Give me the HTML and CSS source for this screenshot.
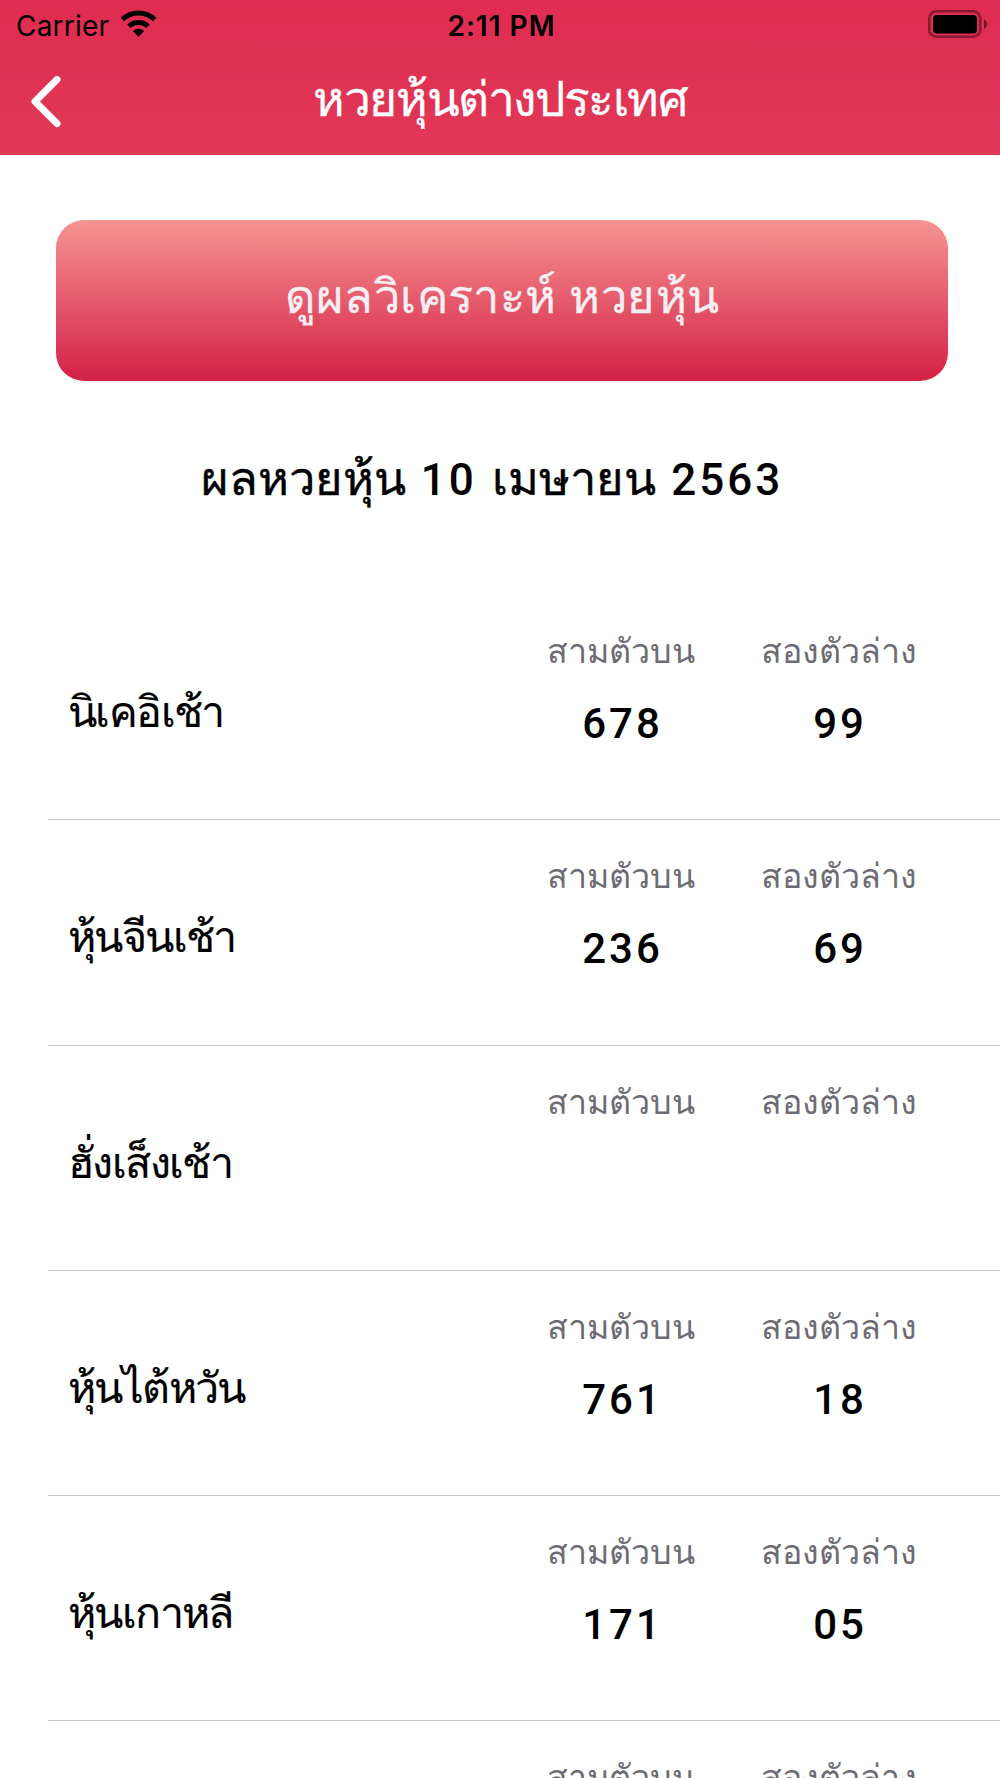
FILE: index.html
```html
<!DOCTYPE html>
<html lang="th">
<head>
    <meta charset="UTF-8">
    <meta name="viewport" content="width=device-width, initial-scale=1.0">
    <title>หวยหุ้นต่างประเทศ</title>
    <link rel="stylesheet" href="styles.css">
</head>
<body>
    <header class="header">
        <div class="status-bar">
            <div class="carrier">
                <span>Carrier</span>
                <svg class="wifi" viewBox="0 0 36 27" width="37" height="27">
                    <path d="M18 27 L12.4 21 Q18 16.4 23.6 21 Z" fill="#000"/>
                    <path d="M8.4 16.2 A14 14 0 0 1 27.6 16.2" fill="none" stroke="#000" stroke-width="5"/>
                    <path d="M1.9 9.5 A23 23 0 0 1 34.1 9.5" fill="none" stroke="#000" stroke-width="5"/>
                </svg>
            </div>
            <span class="time">2:11 PM</span>
            <svg class="battery" viewBox="0 0 59 28" width="59" height="28">
                <rect x="1.3" y="1.3" width="51" height="25.4" rx="7" fill="none" stroke="#000" stroke-opacity="0.4" stroke-width="2.6"/>
                <rect x="5" y="5" width="44" height="18.5" rx="4" fill="#000"/>
                <path d="M56 9 Q59 11 59 14 Q59 17 56 19 Z" fill="#000" fill-opacity="0.5"/>
            </svg>
        </div>
        <div class="nav-bar">
            <svg class="back" viewBox="0 0 30 52" width="30" height="52">
                <path d="M26 3.5 L4 25.5 L26 47.5" fill="none" stroke="#fff" stroke-width="7" stroke-linecap="round" stroke-linejoin="round"/>
            </svg>
            <h1>หวยหุ้นต่างประเทศ</h1>
        </div>
    </header>

    <main>
        <button class="analyze">ดูผลวิเคราะห์ หวยหุ้น</button>
        <h2>ผลหวยหุ้น <span class="digits">10</span> เมษายน <span class="digits">2563</span></h2>

        <ul class="stocks" id="stocks"></ul>
    </main>

    <script src="script.js"></script>
</body>
</html>
```

FILE: styles.css
```css
html {
    overflow: hidden;
}

body {
    margin: 0;
    height: 100vh;
    overflow: hidden;
    background-color: #fff;
    color: #000;
    font-family: 'Noto Sans', 'Liberation Sans', sans-serif;
}

.header {
    height: 155px;
    background: linear-gradient(#df2c50, #e13858);
}

.status-bar {
    display: grid;
    grid-template-columns: 1fr auto 1fr;
    align-items: center;
    height: 51px;
    padding: 0 13px 0 16px;
    font-family: Inter, sans-serif;
    font-size: 28px;
}

.carrier {
    display: flex;
    align-items: center;
    gap: 11px;
    letter-spacing: 0.2px;
}

.wifi {
    margin-bottom: 4px;
}

.time {
    font-weight: 600;
    letter-spacing: 1px;
}

.battery {
    justify-self: end;
    margin-bottom: 3px;
}

.nav-bar {
    display: grid;
    grid-template-columns: 62px 1fr 62px;
    align-items: center;
    height: 102px;
}

.back {
    margin-left: 31px;
}

h1, h2 {
    margin: 0;
    text-align: center;
    font-weight: 400;
}

h1 {
    padding-bottom: 9px;
    color: #fff;
    font-size: 48px;
    line-height: 66px;
    letter-spacing: -1.4px;
    -webkit-text-stroke: 0.3px #fff;
}

.analyze {
    display: block;
    width: 892px;
    height: 161px;
    margin: 65px 0 0 56px;
    padding: 0 0 8px;
    border: none;
    border-radius: 28px;
    background: linear-gradient(#f69494, #d42045);
    color: #f7eff1;
    font-family: inherit;
    font-size: 47px;
    letter-spacing: 0.4px;
    -webkit-text-stroke: 0.3px #f7eff1;
}

h2 {
    margin-top: 66px;
    padding-right: 16px;
    font-size: 47px;
    line-height: 60px;
    word-spacing: 3px;
    -webkit-text-stroke: 0.4px #000;
}

.digits {
    font-family: Roboto, sans-serif;
    font-size: 44px;
    font-weight: 500;
    letter-spacing: 3px;
    -webkit-text-stroke: 0;
}

.stocks {
    list-style: none;
    margin: 85px 0 0;
    padding: 0;
}

.stock {
    display: grid;
    grid-template-columns: 1fr 220px 215px 54px;
    box-sizing: border-box;
    height: 225.25px;
    margin-left: 48px;
    padding-left: 20px;
    border-bottom: 1px solid #c8c8cc;
}

.name {
    padding-top: 87px;
    font-size: 43px;
    line-height: 58px;
    letter-spacing: -1.6px;
    -webkit-text-stroke: 0.2px #000;
}

.result {
    padding-top: 32px;
    text-align: center;
}

.label {
    color: #6d6c74;
    font-size: 34px;
    line-height: 46px;
}

.number {
    margin-top: 27px;
    padding-left: 3px;
    font-family: Roboto, sans-serif;
    font-size: 42px;
    line-height: 48px;
    font-weight: 500;
    letter-spacing: 3px;
}
```

FILE: script.js
```js
const stocks = [
    ['นิเคอิเช้า', '678', '99'],
    ['หุ้นจีนเช้า', '236', '69'],
    ['ฮั่งเส็งเช้า', '', ''],
    ['หุ้นไต้หวัน', '761', '18'],
    ['หุ้นเกาหลี', '171', '05'],
    ['', '', '']
];

document.getElementById('stocks').innerHTML = stocks.map(([name, top, bottom]) => `
    <li class="stock">
        <div class="name">${name}</div>
        <div class="result"><div class="label">สามตัวบน</div><div class="number">${top}</div></div>
        <div class="result"><div class="label">สองตัวล่าง</div><div class="number">${bottom}</div></div>
    </li>`).join('');
```
